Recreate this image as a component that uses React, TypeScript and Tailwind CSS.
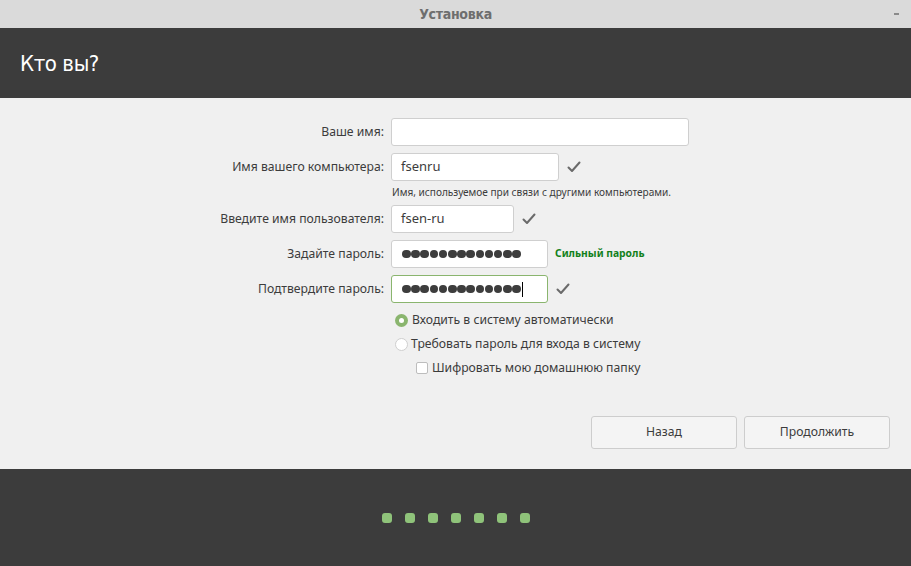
import { ReactNode } from "react";

const font = { fontFamily: '"Noto Sans", "Open Sans", sans-serif' };

const Check = ({ ml }: { ml: string }) => (
  <svg width="14" height="12" viewBox="0 0 14 12" className={ml}>
    <polyline points="1.5,6.5 5,10 12.5,1.5" fill="none" stroke="#6a6a6a" strokeWidth="2" strokeLinecap="round" strokeLinejoin="round" />
  </svg>
);

const Dots = ({ cursor }: { cursor?: boolean }) => (
  <div className="flex items-center gap-[0.6px]">
    {Array.from({ length: 13 }).map((_, i) => (
      <span key={i} className="block w-[8.6px] h-[8.6px] rounded-full bg-[#3d3d3d]" />
    ))}
    {cursor && <span className="block w-px h-[15px] bg-black ml-[1px]" />}
  </div>
);

const Row = ({ label, children }: { label: string; children: ReactNode }) => (
  <div className="flex items-center h-[28px]">
    <div className="w-[385px] text-right pr-[1px] text-[12.2px] text-[#3c3c3c]">{label}</div>
    <div className="ml-[6px] flex items-center">{children}</div>
  </div>
);

const Input = ({ w, children, green }: { w: string; children?: ReactNode; green?: boolean }) => (
  <div
    className={`${w} h-[28px] bg-white rounded-[3px] border flex items-center px-[9px] text-[13px] text-[#3c3c3c] ${
      green ? "border-[#8ab56e]" : "border-[#cfcfcf]"
    }`}
  >
    {children}
  </div>
);

export default function App() {
  return (
    <div className="w-[911px] h-[566px] flex flex-col bg-[#f0f0f0] overflow-hidden" style={font}>
      {/* title bar */}
      <div className="h-[28px] bg-[#dadada] relative flex items-center justify-center">
        <span className="text-[14px] font-bold text-[#6e6e6e] tracking-[-0.3px]" style={{ fontFamily: '"DejaVu Sans Condensed", "Noto Sans", sans-serif' }}>
          Установка
        </span>
        <span className="absolute right-[12px] top-[13px] w-[5px] h-[2px] bg-[#8a8a8a]" />
      </div>

      {/* header */}
      <div className="h-[70px] bg-[#3c3c3c] flex items-center px-[20px]">
        <h1 className="text-[22px] text-white tracking-[-0.4px]" style={{ fontFamily: '"DejaVu Sans Condensed", "Noto Sans", sans-serif' }}>
          Кто вы?
        </h1>
      </div>

      {/* content */}
      <div className="flex-1 flex flex-col pt-[20px]">
        <div className="flex flex-col gap-[7px]">
          <Row label="Ваше имя:">
            <Input w="w-[298px]" />
          </Row>
          <div className="flex flex-col">
            <Row label="Имя вашего компьютера:">
              <Input w="w-[168px]">fsenru</Input>
              <Check ml="ml-[8px]" />
            </Row>
            <div className="pl-[392px] pt-[4px] text-[10.1px] text-[#3c3c3c] h-[17px]">
              Имя, используемое при связи с другими компьютерами.
            </div>
          </div>
          <Row label="Введите имя пользователя:">
            <Input w="w-[123px]">fsen-ru</Input>
            <Check ml="ml-[8px]" />
          </Row>
          <Row label="Задайте пароль:">
            <Input w="w-[157px]">
              <div className="pl-[1px]">
                <Dots />
              </div>
            </Input>
            <span className="ml-[7px] text-[10.3px] font-bold text-[#12801a]">Сильный пароль</span>
          </Row>
          <Row label="Подтвердите пароль:">
            <Input w="w-[157px]" green>
              <div className="pl-[1px]">
                <Dots cursor />
              </div>
            </Input>
            <Check ml="ml-[8px]" />
          </Row>
        </div>

        <div className="flex flex-col pl-[395px] pt-[5px] text-[12.2px] text-[#3c3c3c]">
          <label className="flex items-center h-[24px]">
            <span className="w-[13px] h-[13px] rounded-full bg-[#8ab56e] flex items-center justify-center">
              <span className="w-[5px] h-[5px] rounded-full bg-white" />
            </span>
            <span className="ml-[4px]">Входить в систему автоматически</span>
          </label>
          <label className="flex items-center h-[24px]">
            <span className="w-[13px] h-[13px] rounded-full bg-white border border-[#cfcfcf]" />
            <span className="ml-[3px]">Требовать пароль для входа в систему</span>
          </label>
          <label className="flex items-center h-[24px] pl-[21px]">
            <span className="w-[12px] h-[12px] rounded-[2px] bg-white border border-[#bdbdbd]" />
            <span className="ml-[4px]">Шифровать мою домашнюю папку</span>
          </label>
        </div>

        <div className="flex justify-end gap-[7px] pr-[21px] mt-[36px]">
          <button className="w-[146px] h-[33px] rounded-[3px] border border-[#cdcdcd] bg-[#f4f4f4] text-[12.2px] text-[#3c3c3c]">
            Назад
          </button>
          <button className="w-[146px] h-[33px] rounded-[3px] border border-[#cdcdcd] bg-[#f4f4f4] text-[12.2px] text-[#3c3c3c]">
            Продолжить
          </button>
        </div>
      </div>

      {/* footer */}
      <div className="h-[97px] bg-[#3c3c3c] flex items-center justify-center gap-[13px] pt-[1px]">
        {Array.from({ length: 7 }).map((_, i) => (
          <span key={i} className="block w-[10px] h-[10px] rounded-[3px] bg-[#8fc37a]" />
        ))}
      </div>
    </div>
  );
}
